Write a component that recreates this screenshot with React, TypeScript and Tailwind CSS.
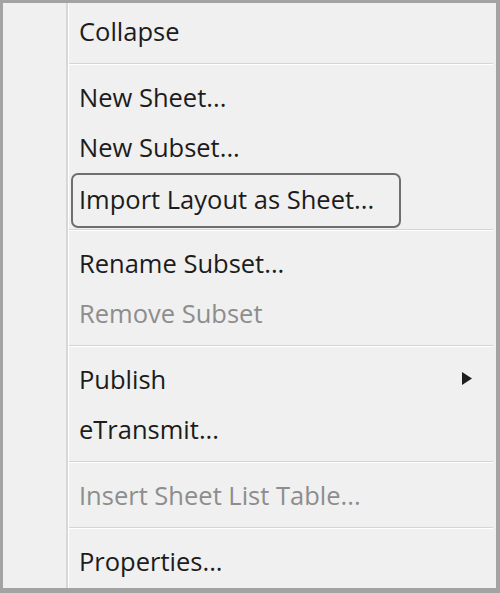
import React from "react";

type MenuItem =
  | { kind: "item"; label: string; disabled?: boolean; submenu?: boolean; focused?: boolean }
  | { kind: "separator" };

const items: MenuItem[] = [
  { kind: "item", label: "Collapse" },
  { kind: "separator" },
  { kind: "item", label: "New Sheet..." },
  { kind: "item", label: "New Subset..." },
  { kind: "item", label: "Import Layout as Sheet...", focused: true },
  { kind: "separator" },
  { kind: "item", label: "Rename Subset..." },
  { kind: "item", label: "Remove Subset", disabled: true },
  { kind: "separator" },
  { kind: "item", label: "Publish", submenu: true },
  { kind: "item", label: "eTransmit..." },
  { kind: "separator" },
  { kind: "item", label: "Insert Sheet List Table...", disabled: true },
  { kind: "separator" },
  { kind: "item", label: "Properties..." },
];

const SubmenuArrow = () => (
  <svg width="10" height="13" viewBox="0 0 10 13" className="absolute right-[21px] top-[17px]">
    <path d="M0 0 L10 6.5 L0 13 Z" fill="#1e1e1e" />
  </svg>
);

export default function App() {
  return (
    <div
      className="w-[500px] h-[593px] bg-[#f0f0f0] border-t-[3px] border-l-[3px] border-r-[4px] border-b-[5px] border-[#a3a3a3] flex"
      style={{ fontFamily: '"Open Sans", "Noto Sans", sans-serif' }}
    >
      {/* icon gutter */}
      <div className="w-[65px] shrink-0 border-r-2 border-r-[#d7d7d7] shadow-[1px_0_0_#ffffff]" />

      <div className="flex-1 flex flex-col pt-[4px] pr-[3px]">
        {items.map((it, i) =>
          it.kind === "separator" ? (
            <div key={i} className="pt-[6px] pb-[9px] pl-[1px]">
              <div className="h-[1px] bg-[#d5d5d5] shadow-[0_1px_0_#ffffff]" />
            </div>
          ) : (
            <div key={i} className="relative h-[50px] flex items-center">
              {it.focused && (
                <div className="absolute left-[3px] w-[330px] top-0 bottom-[-5px] rounded-[7px] border-2 border-[#6e6e6e]" />
              )}
              <span
                className={`pl-[11px] text-[25.5px] leading-none ${
                  it.disabled ? "text-[#8d8d8d]" : "text-[#1c1c1c]"
                } ${it.focused ? "translate-y-[2px]" : ""}`}
              >
                {it.label}
              </span>
              {it.submenu && <SubmenuArrow />}
            </div>
          )
        )}
      </div>
    </div>
  );
}
